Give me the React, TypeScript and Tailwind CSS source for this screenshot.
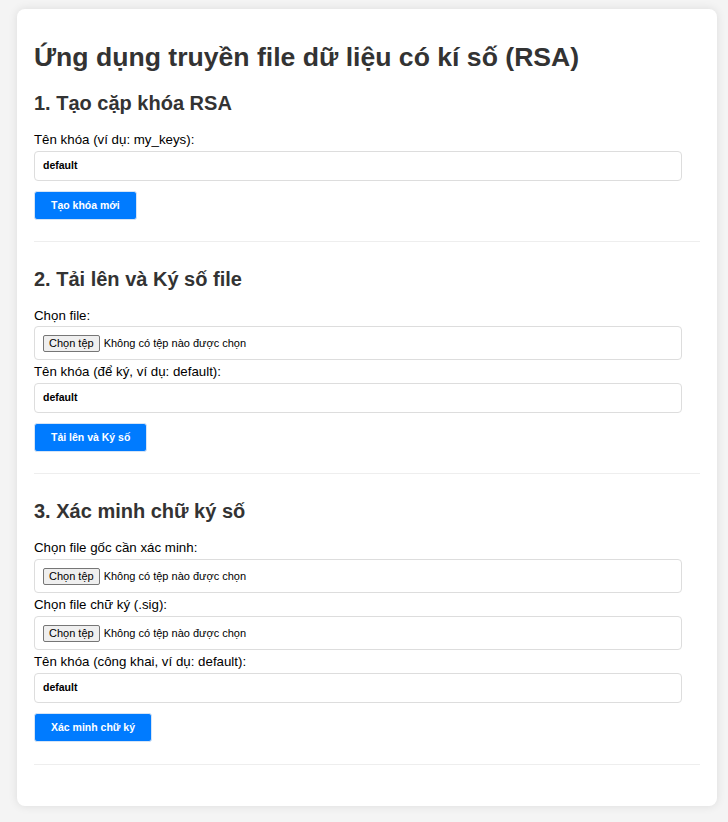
const FileField = ({ className = "" }: { className?: string }) => (
  <div
    className={`${className} mb-[3px] flex h-[34px] w-[648px] items-center rounded-[4px] border border-[#ddd] px-[8px] text-[11px] text-black`}
  >
    <span className="mr-[4px] rounded-[2px] border border-[#767676] bg-[#efefef] px-[5px] leading-[15px]">
      Chọn tệp
    </span>
    <span>Không có tệp nào được chọn</span>
  </div>
);

const TextField = ({ value }: { value: string }) => (
  <div className="mb-[10px] flex h-[30px] w-[648px] items-center rounded-[4px] border border-[#ddd] px-[8px] text-[10.5px] font-bold text-black">
    {value}
  </div>
);

const Label = ({ children }: { children: React.ReactNode }) => (
  <label className="mb-[2px] block text-[13.3px] leading-[18px] text-black">{children}</label>
);

const Button = ({ children }: { children: React.ReactNode }) => (
  <button className="h-[29px] rounded-[3px] border border-[#d6e4f5] bg-[#007bff] px-[16px] text-[10.5px] font-bold text-white">
    {children}
  </button>
);

const Section = ({
  title,
  children,
  className,
}: {
  title: string;
  children: React.ReactNode;
  className: string;
}) => (
  <section className={`${className} border-b border-[#eee]`}>
    <h2 className="mb-[16px] text-[20px] font-bold leading-[24px] text-[#333]">{title}</h2>
    {children}
  </section>
);

export default function App() {
  return (
    <div
      className="min-h-screen bg-[#f4f4f4] pt-[9px] pb-[15px] pl-[17px] pr-[11px]"
      style={{ fontFamily: '"Liberation Sans", Arial, sans-serif' }}
    >
      <div className="rounded-[8px] bg-white px-[17px] pt-[30px] pb-[41px] shadow-[0_0_10px_rgba(0,0,0,0.1)]">
        <h1 className="mb-[16px] text-[26.6px] font-bold leading-[36px] text-[#333]">
          Ứng dụng truyền file dữ liệu có kí số (RSA)
        </h1>

        <Section title="1. Tạo cặp khóa RSA" className="pb-[21px]">
          <Label>Tên khóa (ví dụ: my_keys):</Label>
          <TextField value="default" />
          <Button>Tạo khóa mới</Button>
        </Section>

        <Section title="2. Tải lên và Ký số file" className="pt-[25px] pb-[21px]">
          <Label>Chọn file:</Label>
          <FileField className="-mt-px" />
          <Label>Tên khóa (để ký, ví dụ: default):</Label>
          <TextField value="default" />
          <Button>Tải lên và Ký số</Button>
        </Section>

        <Section title="3. Xác minh chữ ký số" className="pt-[25px] pb-[22px]">
          <Label>Chọn file gốc cần xác minh:</Label>
          <FileField />
          <Label>Chọn file chữ ký (.sig):</Label>
          <FileField />
          <Label>Tên khóa (công khai, ví dụ: default):</Label>
          <div className="mt-px">
            <TextField value="default" />
          </div>
          <Button>Xác minh chữ ký</Button>
        </Section>
      </div>
    </div>
  );
}
